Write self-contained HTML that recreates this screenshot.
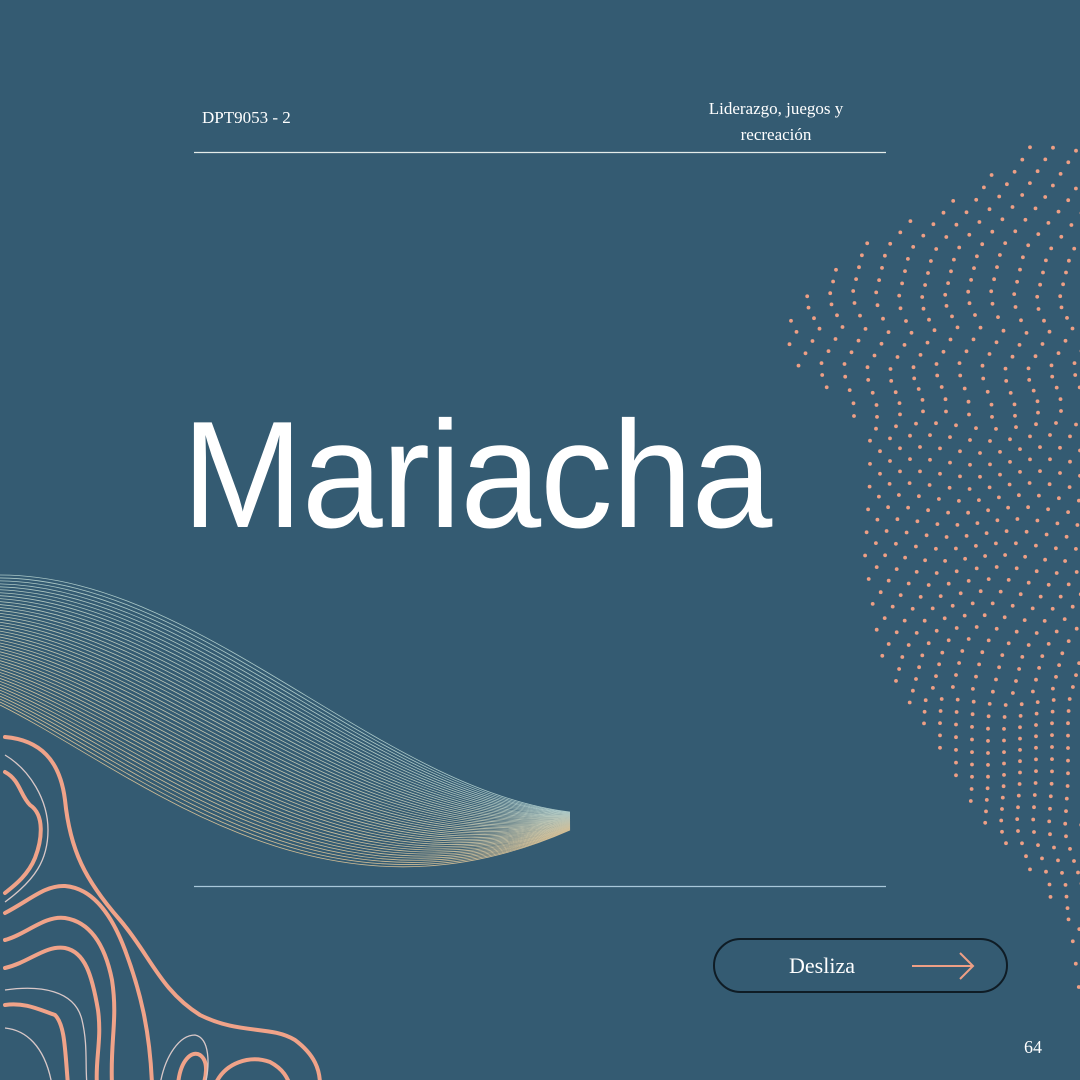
<!DOCTYPE html>
<html><head><meta charset="utf-8"><style>
html,body{margin:0;padding:0}
body{width:1080px;height:1080px;background:#345b72;position:relative;overflow:hidden;font-family:"Liberation Serif",serif;color:#fff}
.t{position:absolute;white-space:nowrap}
svg{position:absolute;left:0;top:0}
</style></head><body>
<svg id="s" width="1080" height="1080" viewBox="0 0 1080 1080">
<g id="waves" fill="none" stroke-width="0.8"></g>
<g id="dots" fill="#ee9f85"></g>
<g fill="none" stroke="#f0a389" stroke-width="4" stroke-linecap="round">
<path d="M5,737 C40,740 60,760 65,800 C70,850 85,880 120,920 C150,955 160,990 200,1015 C240,1035 270,1025 295,1040 C315,1055 320,1070 320,1085"/>
<path d="M5,772 C20,780 20,795 30,805 C45,815 42,840 35,858 C28,875 15,885 5,893"/>
<path d="M5,913 C30,900 45,885 65,886 C90,888 110,910 125,950 C140,990 150,1030 152,1085"/>
<path d="M5,940 C25,935 45,915 65,918 C90,922 105,945 112,980 C118,1020 110,1040 112,1085"/>
<path d="M5,968 C30,962 45,945 65,948 C85,952 92,975 98,1010 C102,1040 95,1060 97,1085"/>
<path d="M5,1005 C25,1002 40,1010 55,1015 C65,1025 65,1050 68,1085"/>
<path d="M178,1085 C180,1060 192,1050 200,1055 C210,1062 205,1080 203,1085"/>
<path d="M215,1085 C225,1062 250,1055 270,1062 C285,1070 288,1080 290,1085"/>
</g>
<g fill="none" stroke="#d9c8c8" stroke-width="1.3">
<path d="M5,755 C30,770 48,800 48,830 C48,860 35,880 5,902"/>
<path d="M5,1028 C25,1030 45,1045 52,1085"/>
<path d="M5,990 C40,985 75,990 82,1020 C88,1045 85,1065 87,1085"/>
<path d="M160,1085 C165,1055 180,1035 195,1035 C210,1038 210,1065 205,1085"/>
</g>
<line x1="194" y1="152.5" x2="886" y2="152.5" stroke="#e4ecea" stroke-width="1.2"/>
<line x1="194" y1="886.5" x2="886" y2="886.5" stroke="#a9c8da" stroke-width="1.2"/>
<rect x="714" y="939" width="293" height="53" rx="26.5" fill="none" stroke="#0f1c25" stroke-width="2"/>
<path d="M912,966 H973 M960,953 L973,966 L960,979" fill="none" stroke="#ee9f85" stroke-width="2"/>
</svg>
<div class="t" style="left:202px;top:108px;font-size:17px">DPT9053 - 2</div>
<div class="t" style="left:676px;top:96px;width:200px;text-align:center;font-size:17px;line-height:26px;white-space:normal">Liderazgo, juegos y recreación</div>
<div class="t" style="left:182px;top:384px;font-family:'Liberation Sans',sans-serif;font-size:152px;transform:scaleX(0.955);transform-origin:left top;letter-spacing:-1px;line-height:1.2">Mariacha</div>
<div class="t" style="left:789px;top:953px;font-size:22px">Desliza</div>
<div class="t" style="left:1024px;top:1037px;font-size:18px">64</div>
<script>
(function(){
var ns="http://www.w3.org/2000/svg";
var w=document.getElementById("waves"),n=45;
for(var i=0;i<n;i++){var t=i/(n-1);
var y0=575+t*130,c1x=200-t*60,c1y=575+t*200,c2x=380-t*60,c2y=790+t*150,ey=812+t*18;
var p=document.createElementNS(ns,"path");
p.setAttribute("d","M0,"+y0+" C"+c1x+","+c1y+" "+c2x+","+c2y+" 570,"+ey);
var r=Math.round(170+t*40),g=Math.round(200-t*10),b=Math.round(200-t*50);
p.setAttribute("stroke","rgb("+r+","+g+","+b+")");w.appendChild(p);}
var d=document.getElementById("dots");
var L=[[150,1030],[200,950],[250,860],[300,800],[330,785],[370,800],[400,840],[430,870],[480,870],[560,865],[650,880],[720,920],[780,960],[830,990],[880,1040],[920,1070],[1000,1080]];
function xl(y){for(var k=0;k<L.length-1;k++){if(y>=L[k][0]&&y<=L[k+1][0]){var f=(y-L[k][0])/(L[k+1][0]-L[k][0]);return L[k][1]+f*(L[k+1][1]-L[k][1]);}}return 1080;}
var row=0;
for(var y=150;y<1000;y+=12,row++){var x0=xl(y);var sp=y<420?23:(y<700?20:16);
var off=(row%2)*sp/2;
for(var x=x0+off;x<1082;x+=sp){var c=document.createElementNS(ns,"circle");
var yy=y+Math.sin(x*0.05+y*0.02)*3;
c.setAttribute("cx",x.toFixed(1));c.setAttribute("cy",yy.toFixed(1));c.setAttribute("r","1.9");d.appendChild(c);}}
})();
</script>
</body></html>
